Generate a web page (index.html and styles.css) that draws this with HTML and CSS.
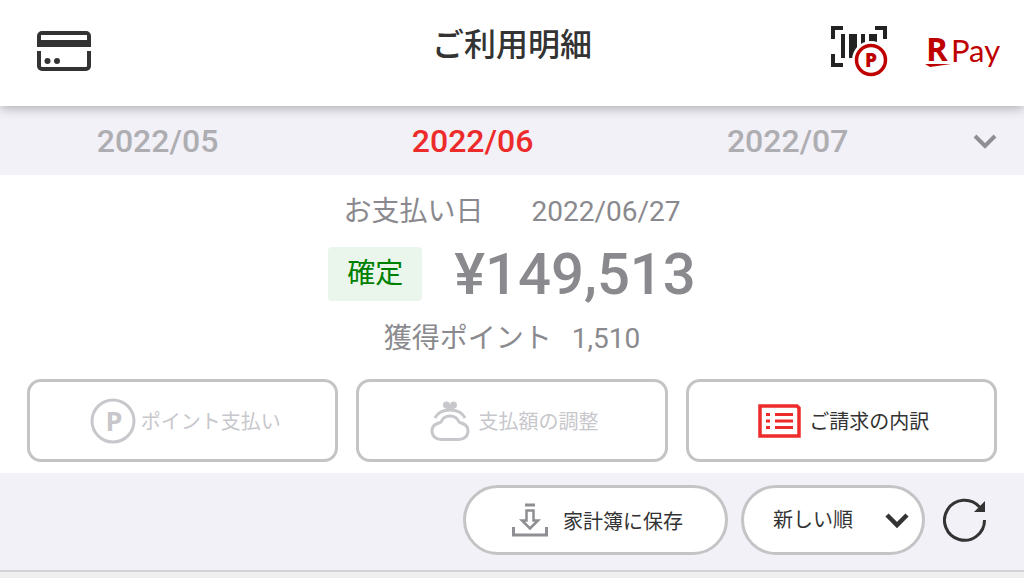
FILE: index.html
```html
<!DOCTYPE html>
<html lang="ja">
<head>
    <meta charset="utf-8">
    <meta name="viewport" content="width=device-width, initial-scale=1">
    <title>ご利用明細</title>
    <link rel="stylesheet" href="styles.css">
</head>
<body>
    <header class="header">
        <a href="#" class="card-link" aria-label="カード">
            <svg width="56" height="42" viewBox="0 0 56 42">
                <path d="M1 17V6a5 5 0 0 1 5-5h44a5 5 0 0 1 5 5v11zM5 5v5h46V5z" fill="#333" fill-rule="evenodd"/>
                <path d="M3 21v15a3 3 0 0 0 3 3h44a3 3 0 0 0 3-3V21" fill="none" stroke="#333" stroke-width="4"/>
                <circle cx="11.500" cy="31" r="3" fill="#333"/>
                <circle cx="21" cy="31" r="3" fill="#333"/>
            </svg>
        </a>
        <h1>ご利用明細</h1>
        <div class="header-right">
            <a href="#" class="barcode" aria-label="ポイントカード">
                <svg width="58" height="52" viewBox="0 0 58 52">
                    <path d="M13 3H3V14M45 3H55V14M3 29V40H13" fill="none" stroke="#222" stroke-width="4"/>
                    <path d="M11 9h4v24h-4zM19 9h8v24h-8zM31 9h4v15h-4zM39 9h8v12h-8z" fill="#222"/>
                    <circle cx="41" cy="35" r="19" fill="#fff"/>
                    <circle cx="41" cy="35" r="14.500" fill="#fff" stroke="#bf0000" stroke-width="3.500"/>
                    <text x="41" y="42" class="logo-p">P</text>
                </svg>
            </a>
            <a href="#" class="pay" aria-label="R Pay">
                <svg width="80" height="56" viewBox="0 0 80 56">
                    <text x="4" y="38" class="logo-r">R</text>
                    <path d="M3 41h26L8 44z" fill="#bf0000"/>
                    <text x="29" y="39" class="logo-pay">Pay</text>
                </svg>
            </a>
        </div>
    </header>

    <nav class="months">
        <a href="#">2022/05</a>
        <a href="#" class="active">2022/06</a>
        <a href="#">2022/07</a>
        <button type="button" class="months-more" aria-label="月を選択">
            <svg width="24" height="18" viewBox="0 0 24 18">
                <path d="M2 4l10 10L22 4" fill="none" stroke="#8e8e93" stroke-width="4"/>
            </svg>
        </button>
    </nav>

    <main>
        <section class="summary">
            <div class="row pay-date">
                <span>お支払い日</span>
                <span>2022/06/27</span>
            </div>
            <div class="row total">
                <span class="badge">確定</span>
                <span class="amount">¥149,513</span>
            </div>
            <div class="row points">
                <span>獲得ポイント</span>
                <span>1,510</span>
            </div>
            <div class="actions">
                <button type="button" class="action point" disabled>
                    <svg width="46" height="46" viewBox="0 0 46 46">
                        <circle cx="23" cy="23" r="21" fill="none" stroke="#c7c7cc" stroke-width="3"/>
                        <text x="24" y="33" class="icon-p">P</text>
                    </svg>
                    ポイント支払い
                </button>
                <button type="button" class="action" disabled>
                    <svg width="40" height="40" viewBox="0 0 40 40">
                        <g fill="none" stroke="#c7c7cc" stroke-width="3">
                            <path d="M5 17C8 11 13 9 20 9s12 2 15 8"/>
                            <path d="M11 21C13 16 16 15 20 15s7 1 9 6c1 1 3 1 4.500 2C36 24 38 27 38 30c0 5-4 8.500-9 8.500H11c-5 0-9-3.500-9-8.500 0-3 2-6 4.500-7 1.500-1 3.500-1 4.500-2z"/>
                        </g>
                        <circle cx="16.500" cy="4" r="3.500" fill="#c7c7cc"/>
                        <circle cx="23.500" cy="4" r="3.500" fill="#c7c7cc"/>
                        <path d="M16 4h8v5h-8z" fill="#c7c7cc"/>
                    </svg>
                    支払額の調整
                </button>
                <button type="button" class="action detail">
                    <svg width="43" height="34" viewBox="0 0 43 34">
                        <path d="M2 2h37l2 2v28H2z" fill="none" stroke="#ed2b2b" stroke-width="3.500"/>
                        <path d="M8 10.500h4M8 17h4M8 23.500h4M17 10.500h18M17 17h18M17 23.500h18" stroke="#ed2b2b" stroke-width="3"/>
                    </svg>
                    ご請求の内訳
                </button>
            </div>
        </section>

        <section class="toolbar">
            <button type="button" class="pill save">
                <svg width="36" height="34" viewBox="0 0 36 34">
                    <path d="M13 2h10M1.500 24v8h33v-8" fill="none" stroke="#8e8e93" stroke-width="3"/>
                    <path d="M14.500 7.500h7v10H26l-8 8-8-8h4.500z" fill="none" stroke="#8e8e93" stroke-width="2.500"/>
                </svg>
                家計簿に保存
            </button>
            <div class="sort">
                <select class="pill" aria-label="並び順">
                    <option>新しい順</option>
                    <option>古い順</option>
                </select>
                <svg width="24" height="18" viewBox="0 0 24 18">
                    <path d="M2 4l10 10L22 4" fill="none" stroke="#333" stroke-width="4.500"/>
                </svg>
            </div>
            <button type="button" class="reload" aria-label="更新">
                <svg width="44" height="44" viewBox="0 0 44 44">
                    <path d="M41.500 22A20 20 0 1 1 36.500 9" fill="none" stroke="#333" stroke-width="3"/>
                    <path d="M42 3v11H31z" fill="#333"/>
                </svg>
            </button>
        </section>
    </main>
</body>
</html>
```
FILE: styles.css
```css
* {
    box-sizing: border-box;
}
body {
    margin: 0;
    background-color: #efeff0;
    color: #333;
    font-family: Roboto, "Noto Sans CJK JP", sans-serif;
}
svg {
    display: block;
    flex: none;
}
a {
    color: inherit;
    text-decoration: none;
}
button, select {
    margin: 0;
    padding: 0;
    border: 0;
    background: none;
    color: inherit;
    font: inherit;
}

/* header */
.header {
    position: relative;
    display: grid;
    grid-template-columns: 1fr auto 1fr;
    align-items: center;
    height: 106px;
    padding: 0 22px 4px;
    background-color: #fff;
    box-shadow: 0 1px 12px rgba(0, 0, 0, 0.35);
}
.header h1 {
    margin: 0;
    padding-bottom: 12px;
    font-size: 32px;
    font-weight: 500;
    line-height: 40px;
}
.card-link {
    padding-left: 14px;
}
.header-right {
    display: flex;
    justify-content: flex-end;
    align-items: center;
    gap: 34px;
}
.logo-p, .logo-r, .logo-pay {
    fill: #bf0000;
    font-family: "Open Sans", sans-serif;
}
.logo-p {
    font-size: 19px;
    font-weight: 800;
    text-anchor: middle;
}
.logo-r {
    font-size: 33px;
    font-weight: 700;
}
.logo-pay {
    font-family: Lato, sans-serif;
    font-size: 31px;
}

/* month tabs */
.months {
    display: grid;
    grid-template-columns: repeat(3, 4fr) 1fr;
    height: 69px;
    background-color: #f2f1f7;
    color: #aeaeb2;
    font-size: 32px;
    font-weight: 500;
    line-height: 70px;
    text-align: center;
}
.months .active {
    color: #ed2b2b;
}
.months-more {
    display: flex;
    justify-content: center;
    align-items: center;
}

/* payment summary */
.summary {
    position: relative;
    padding: 19px 27px 11px;
    background-color: #fff;
    color: #8a8a8e;
}
.row {
    display: flex;
    justify-content: center;
    align-items: center;
    font-size: 28px;
    font-weight: 400;
    line-height: 36px;
}
.pay-date {
    gap: 48px;
}
.total {
    gap: 32px;
    margin: 17px 0 20px;
}
.points {
    gap: 20px;
}
.badge {
    padding: 0 19px;
    border-radius: 4px;
    background-color: #eaf6ec;
    color: #008000;
    line-height: 54px;
}
.amount {
    font-size: 58px;
    font-weight: 500;
    line-height: 54px;
}
.actions {
    display: grid;
    grid-template-columns: repeat(3, 1fr);
    gap: 18px;
    margin-top: 22px;
}
.action {
    display: flex;
    justify-content: center;
    align-items: center;
    gap: 8px;
    height: 83px;
    padding-left: 5px;
    border: 3px solid #c4c4c6;
    border-radius: 14px;
    font-size: 20px;
    color: #c7c7cc;
}
.action.point {
    gap: 5px;
}
.action.detail {
    color: #333;
}
.icon-p {
    fill: #c7c7cc;
    font-family: "Open Sans", sans-serif;
    font-size: 27px;
    font-weight: 700;
    text-anchor: middle;
}

/* list toolbar */
.toolbar {
    display: flex;
    justify-content: flex-end;
    align-items: center;
    gap: 13px;
    padding: 12px 37px 15px;
    border-bottom: 2px solid #d1d1d6;
    background-color: #f2f1f7;
    box-shadow: 0 2px 4px rgba(0, 0, 0, 0.2);
    font-size: 20px;
}
.pill {
    height: 70px;
    border: 3px solid #c4c4c6;
    border-radius: 35px;
    background-color: #fff;
}
.save {
    display: flex;
    align-items: center;
    gap: 15px;
    padding: 0 42px 0 46px;
}
.sort {
    display: grid;
    align-items: center;
}
.sort select, .sort svg {
    grid-area: 1 / 1;
}
.sort select {
    width: 184px;
    padding-left: 29px;
    appearance: none;
}
.sort svg {
    justify-self: end;
    margin-right: 16px;
    pointer-events: none;
}
.reload {
    margin-left: 5px;
}
```
